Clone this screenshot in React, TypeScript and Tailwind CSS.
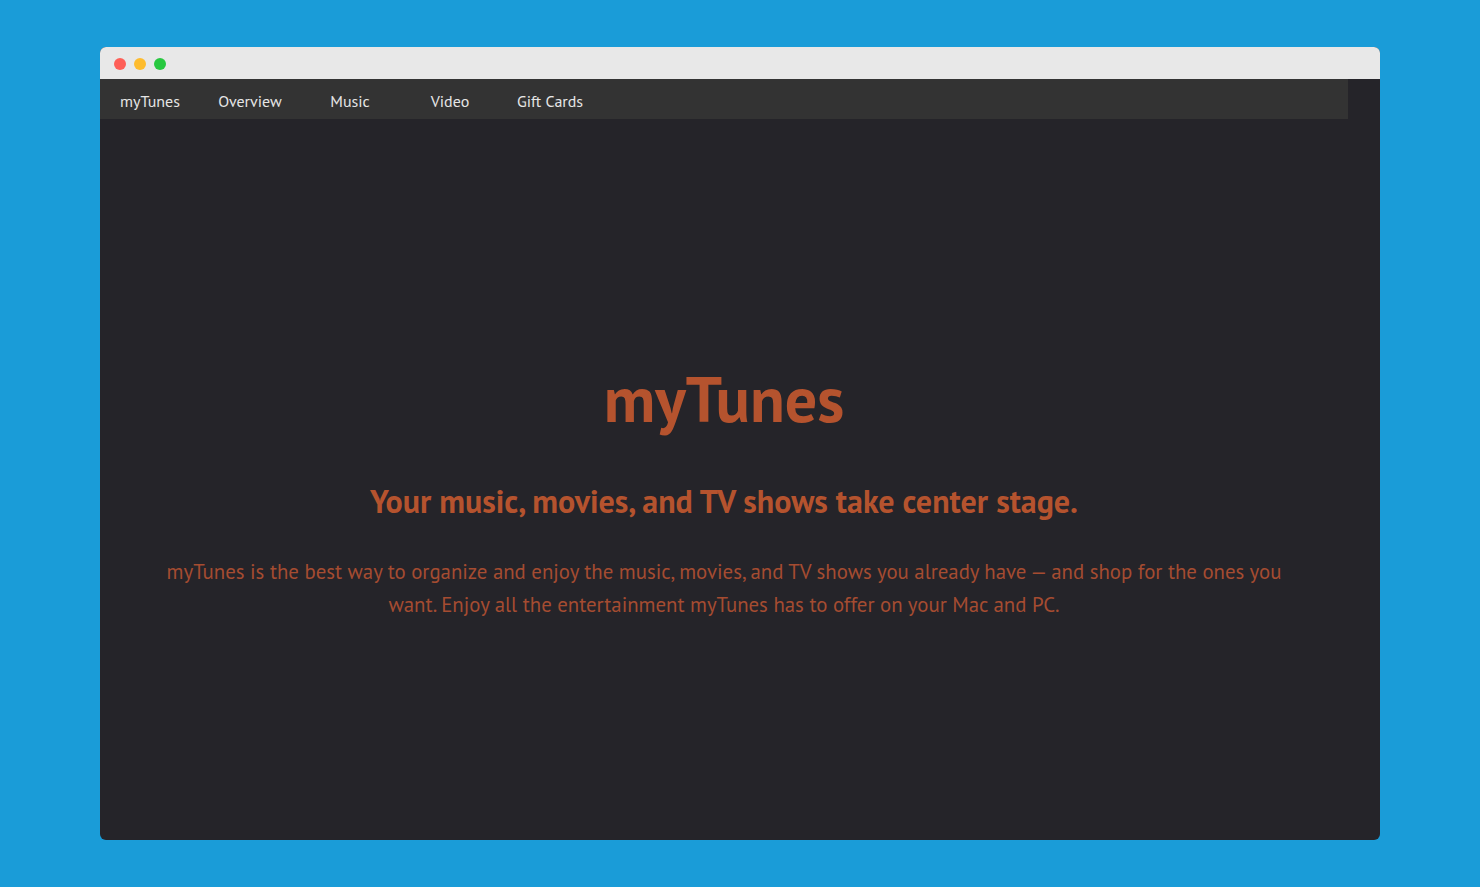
import React from "react";

const font = { fontFamily: '"PT Sans", Lato, "Noto Sans", sans-serif' };

export default function App() {
  const nav = ["myTunes", "Overview", "Music", "Video", "Gift Cards"];
  return (
    <div className="w-full h-[887px] bg-[#1a9cd8] pt-[47px] px-[100px]" style={font}>
      <div className="w-[1280px] h-[793px] rounded-[6px] overflow-hidden bg-[#252429] flex flex-col">
        <div className="h-[32px] bg-[#e8e8e8] flex items-center gap-[8px] pl-[14px] pt-[2px] shrink-0">
          <span className="w-[12px] h-[12px] rounded-full bg-[#fe5f57]" />
          <span className="w-[12px] h-[12px] rounded-full bg-[#febc2e]" />
          <span className="w-[12px] h-[12px] rounded-full bg-[#28c840]" />
        </div>
        <nav className="h-[40px] w-[1248px] bg-[#333333] flex shrink-0 pt-[4px]">
          {nav.map((n) => (
            <div key={n} className="w-[100px] flex items-center justify-center text-[16px] text-[#e6e6e6]">
              {n}
            </div>
          ))}
        </nav>
        <div className="w-[1248px] flex-1 flex flex-col items-center pt-[242px] px-[60px] text-center">
          <h1 className="text-[64px] leading-[76px] font-bold text-[#b5532e]">myTunes</h1>
          <h2 className="mt-[44px] text-[32px] leading-[40px] font-bold text-[#b5532e]">
            Your music, movies, and TV shows take center stage.
          </h2>
          <p className="mt-[34px] text-[20.8px] leading-[33px] text-[#a54c31]">
            myTunes is the best way to organize and enjoy the music, movies, and TV shows you already have — and shop for the ones you want. Enjoy all the entertainment myTunes has to offer on your Mac and PC.
          </p>
        </div>
      </div>
    </div>
  );
}
